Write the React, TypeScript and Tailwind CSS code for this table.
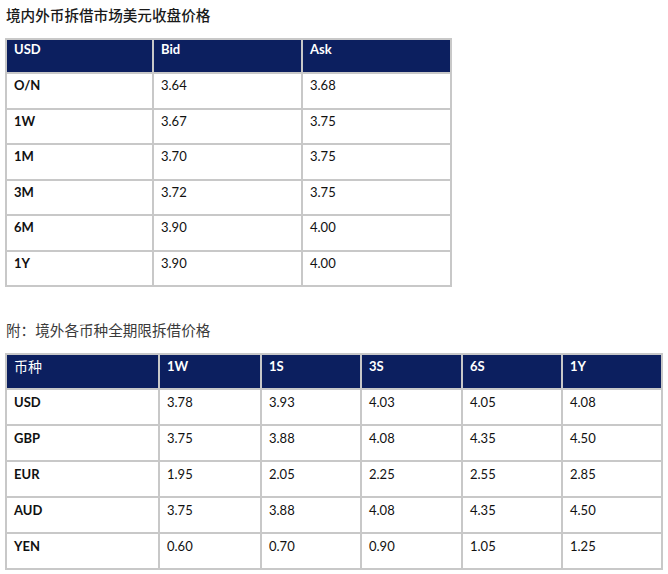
const usdRows = [
  ["O/N", "3.64", "3.68"],
  ["1W", "3.67", "3.75"],
  ["1M", "3.70", "3.75"],
  ["3M", "3.72", "3.75"],
  ["6M", "3.90", "4.00"],
  ["1Y", "3.90", "4.00"],
];

const termHeaders = ["币种", "1W", "1S", "3S", "6S", "1Y"];

const termRows = [
  ["USD", "3.78", "3.93", "4.03", "4.05", "4.08"],
  ["GBP", "3.75", "3.88", "4.08", "4.35", "4.50"],
  ["EUR", "1.95", "2.05", "2.25", "2.55", "2.85"],
  ["AUD", "3.75", "3.88", "4.08", "4.35", "4.50"],
  ["YEN", "0.60", "0.70", "0.90", "1.05", "1.25"],
];

const cjk = "font-['Noto_Sans_CJK_SC','Noto_Sans',sans-serif]";

export default function App() {
  return (
    <div className="min-h-[574px] w-[668px] bg-white font-['Lato','Noto_Sans_CJK_SC',sans-serif] text-[13px] text-[#111]">
      {/* 境内美元拆借 */}
      <div className={`${cjk} pl-[6px] pt-[5px] text-[14.6px] font-medium leading-[20px] text-[#1a1a1a]`}>
        境内外币拆借市场美元收盘价格
      </div>

      <div className="ml-[5px] mt-[13px] grid w-[447px] grid-cols-[145px_147px_147px] gap-[2px] bg-[#c8c8c8] p-[2px]">
        {["USD", "Bid", "Ask"].map((h) => (
          <div key={h} className="h-[32px] bg-[#0c1f5f] pl-[7px] pt-[1px] font-bold leading-[16px] text-white">
            {h}
          </div>
        ))}
        {usdRows.map((row) =>
          row.map((cell, i) => (
            <div
              key={row[0] + i}
              className={`h-[33.5px] bg-white pl-[7px] pt-[3px] leading-[16px] ${i === 0 ? "font-bold" : ""}`}
            >
              {cell}
            </div>
          ))
        )}
      </div>

      {/* 境外各币种 */}
      <div className={`${cjk} mt-[33px] pl-[6px] text-[14.6px] leading-[20px] text-[#3a3a3a]`}>
        附：境外各币种全期限拆借价格
      </div>

      <div className="ml-[5px] mt-[13px] grid w-[658px] grid-cols-[151px_100px_98px_99px_98px_98px] gap-[2px] bg-[#c8c8c8] p-[2px]">
        {termHeaders.map((h, i) => (
          <div
            key={h + i}
            className={`h-[33px] bg-[#0c1f5f] pl-[7px] pt-[3px] leading-[16px] text-white ${i === 0 ? `${cjk} text-[14px]` : "font-bold"}`}
          >
            {h}
          </div>
        ))}
        {termRows.map((row) =>
          row.map((cell, i) => (
            <div
              key={row[0] + i}
              className={`h-[34px] bg-white pl-[7px] pt-[4px] leading-[16px] ${i === 0 ? "font-bold" : ""}`}
            >
              {cell}
            </div>
          ))
        )}
      </div>
    </div>
  );
}
